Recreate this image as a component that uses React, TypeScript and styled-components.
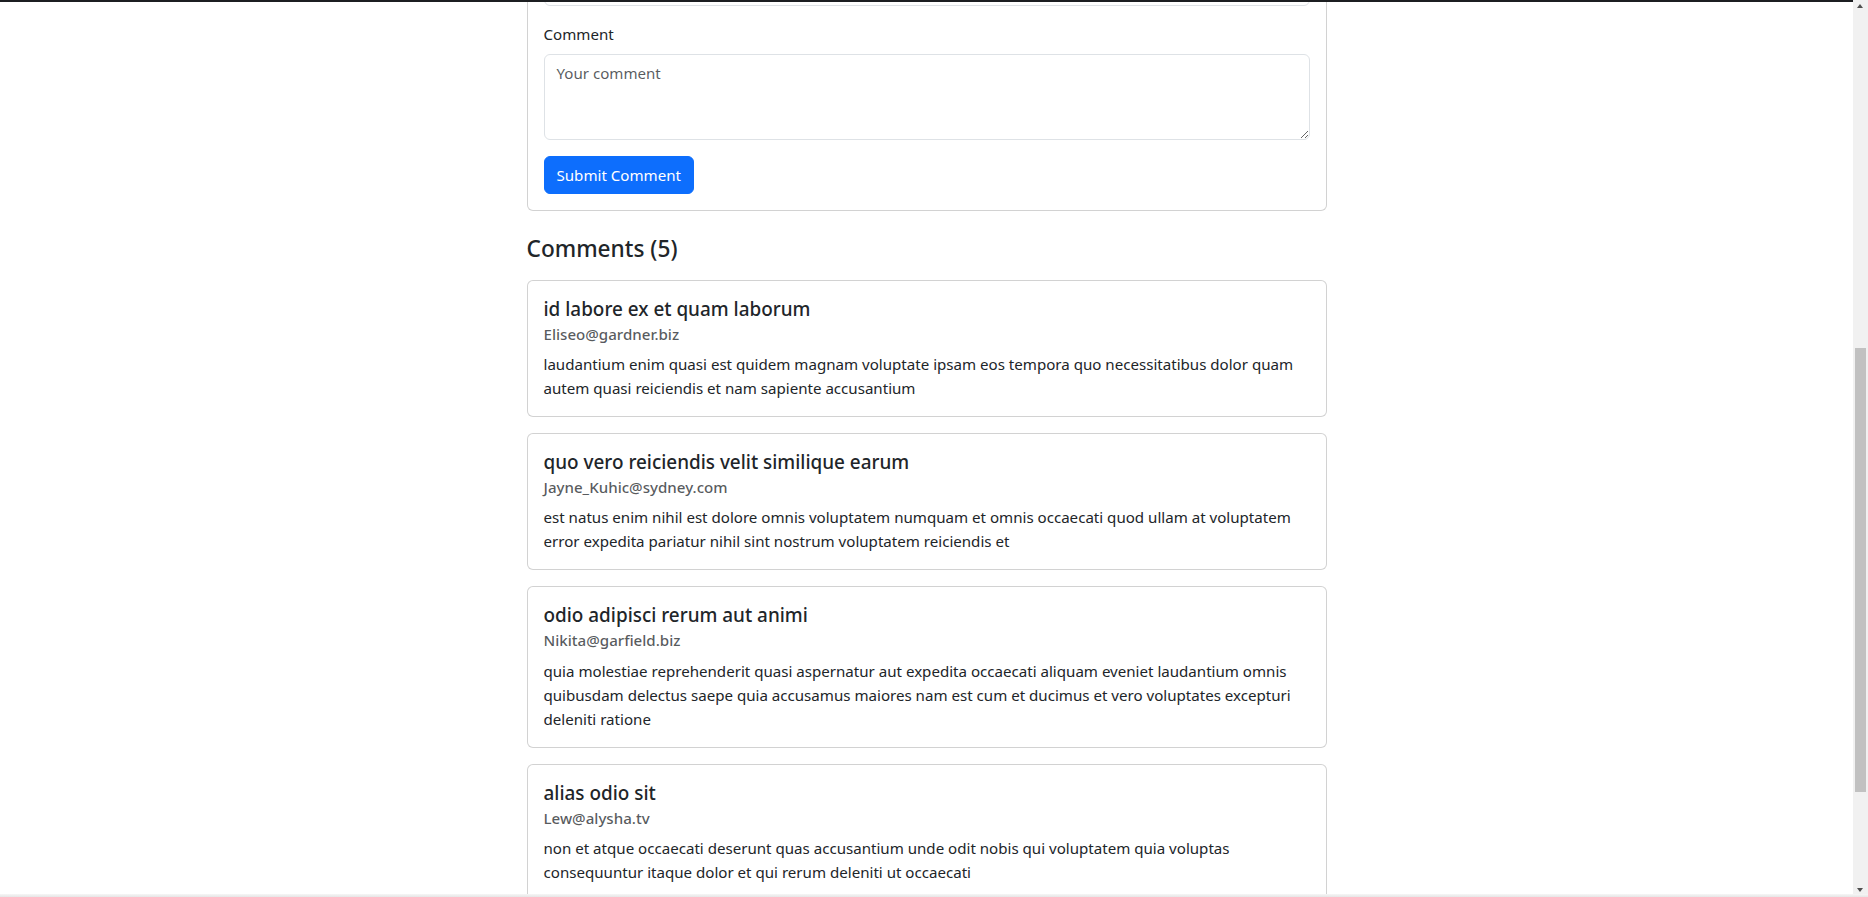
import React, { useLayoutEffect, useRef } from "react";
import styled, { createGlobalStyle } from "styled-components";

const GlobalStyle = createGlobalStyle`
  *, *::before, *::after { box-sizing: border-box; }
  body {
    margin: 0;
    padding-right: 15px;
    font-family: "Noto Sans", system-ui, sans-serif;
    font-size: 15.1px;
    line-height: 24px;
    color: #212529;
    background: #fff;
  }
`;

const TopEdge = styled.div`
  position: fixed;
  top: 0;
  left: 0;
  right: 0;
  height: 2px;
  background: #1c1e21;
  z-index: 10;
`;

const BottomEdge = styled.div`
  position: fixed;
  left: 0;
  right: 0;
  bottom: 0;
  height: 3px;
  background: linear-gradient(to bottom, #f6f6f6, #e6e6e6);
  z-index: 12;
`;

const ScrollTrack = styled.div`
  position: fixed;
  top: 0;
  right: 0;
  bottom: 0;
  width: 15px;
  background: #f1f1f1;
  z-index: 11;
`;

const ScrollArrow = styled.div<{ $down?: boolean }>`
  position: absolute;
  left: 4px;
  width: 0;
  height: 0;
  border-left: 3.5px solid transparent;
  border-right: 3.5px solid transparent;
  ${(p) =>
    p.$down
      ? `bottom: 5px; border-top: 4px solid #505050;`
      : `top: 4px; border-bottom: 4px solid #505050;`}
`;

const ScrollThumb = styled.div`
  position: absolute;
  left: 2px;
  right: 2px;
  top: 348px;
  height: 444px;
  background: #c1c1c1;
`;

const NavBar = styled.nav`
  background: #212529;
  padding: 8px 0;
`;

const NavInner = styled.div`
  max-width: 800px;
  margin: 0 auto;
  display: flex;
  align-items: center;
  justify-content: space-between;
  height: 40px;
`;

const Brand = styled.span`
  color: #fff;
  font-size: 19px;
  line-height: 30px;
`;

const NavLink = styled.span`
  color: rgba(255, 255, 255, 0.55);
`;

const Container = styled.main`
  max-width: 800px;
  margin: 0 auto;
  padding: 24px 0 10px;
`;

const PageTitle = styled.h1`
  margin: 0 0 16px;
  font-size: 38px;
  font-weight: 500;
  line-height: 48px;
`;

const OutlineButton = styled.button`
  display: inline-block;
  font: inherit;
  padding: 6px 12px;
  border: 1px solid #6c757d;
  border-radius: 6px;
  background: transparent;
  color: #6c757d;
  margin-bottom: 16px;
`;

const Card = styled.section<{ $mb: number }>`
  border: 1px solid rgba(0, 0, 0, 0.175);
  border-radius: 6px;
  background: #fff;
  margin-bottom: ${(p) => p.$mb}px;
`;

const CardBody = styled.div`
  padding: 16px;
`;

const CardTitle = styled.h5<{ $size: number; $lh: number; $mb?: number }>`
  margin: 0 0 ${(p) => p.$mb ?? 8}px;
  font-size: ${(p) => p.$size}px;
  font-weight: 500;
  line-height: ${(p) => p.$lh}px;
  color: #212529;
`;

const CardSubtitle = styled.h6`
  margin: -4px 0 8px;
  font-size: 15.1px;
  font-weight: 500;
  line-height: 19.2px;
  color: rgba(33, 37, 41, 0.75);
`;

const CardText = styled.p`
  margin: 0;
`;

const FormGroup = styled.div`
  margin-bottom: 16px;
`;

const Label = styled.label`
  display: inline-block;
  margin-bottom: 8px;
`;

const fieldStyles = `
  display: block;
  width: 100%;
  padding: 6px 12px;
  font: inherit;
  font-size: 15.1px;
  line-height: 24px;
  color: #212529;
  background: #fff;
  border: 1px solid #dee2e6;
  border-radius: 6px;
  &::placeholder { color: rgba(33, 37, 41, 0.75); }
`;

const Input = styled.input`
  ${fieldStyles}
`;

const TextArea = styled.textarea`
  ${fieldStyles}
  height: 86px;
  resize: vertical;
`;

const SubmitButton = styled.button`
  display: inline-block;
  font: inherit;
  font-size: 15.1px;
  line-height: 24px;
  padding: 6px 12px;
  border: 1px solid #0d6efd;
  border-radius: 6px;
  background: #0d6efd;
  color: #fff;
`;

const SectionHeading = styled.h4`
  margin: 0 0 16px;
  font-size: 22.65px;
  font-weight: 500;
  line-height: 28.8px;
`;

const comments = [
  {
    name: "id labore ex et quam laborum",
    email: "Eliseo@gardner.biz",
    body: "laudantium enim quasi est quidem magnam voluptate ipsam eos tempora quo necessitatibus dolor quam autem quasi reiciendis et nam sapiente accusantium",
  },
  {
    name: "quo vero reiciendis velit similique earum",
    email: "Jayne_Kuhic@sydney.com",
    body: "est natus enim nihil est dolore omnis voluptatem numquam et omnis occaecati quod ullam at voluptatem error expedita pariatur nihil sint nostrum voluptatem reiciendis et",
  },
  {
    name: "odio adipisci rerum aut animi",
    email: "Nikita@garfield.biz",
    body: "quia molestiae reprehenderit quasi aspernatur aut expedita occaecati aliquam eveniet laudantium omnis quibusdam delectus saepe quia accusamus maiores nam est cum et ducimus et vero voluptates excepturi deleniti ratione",
  },
  {
    name: "alias odio sit",
    email: "Lew@alysha.tv",
    body: "non et atque occaecati deserunt quas accusantium unde odit nobis qui voluptatem quia voluptas consequuntur itaque dolor et qui rerum deleniti ut occaecati",
  },
  {
    name: "vero eaque aliquid doloribus et culpa",
    email: "Hayden@althea.biz",
    body: "harum non quasi et ratione tempore iure ex voluptates in ratione harum architecto fugit inventore cupiditate voluptates magni quo et",
  },
];

export default function App() {
  const areaRef = useRef<HTMLTextAreaElement>(null);

  useLayoutEffect(() => {
    const el = areaRef.current;
    if (!el) return;
    const top = el.getBoundingClientRect().top + window.scrollY;
    window.scrollTo(0, top - 54);
  }, []);

  return (
    <>
      <GlobalStyle />
      <TopEdge />
      <ScrollTrack>
        <ScrollArrow />
        <ScrollThumb />
        <ScrollArrow $down />
      </ScrollTrack>
      <BottomEdge />
      <NavBar>
        <NavInner>
          <Brand>Blog</Brand>
          <NavLink>Posts</NavLink>
        </NavInner>
      </NavBar>
      <Container>
        <OutlineButton type="button">← Back to Posts</OutlineButton>
        <PageTitle>Post Details</PageTitle>
        <Card $mb={24}>
          <CardBody>
            <CardTitle $size={30} $lh={38}>
              sunt aut facere repellat provident occaecati excepturi optio reprehenderit
            </CardTitle>
            <CardSubtitle>By Leanne Graham</CardSubtitle>
            <CardText>
              quia et suscipit suscipit recusandae consequuntur expedita et cum reprehenderit
              molestiae ut ut quas totam nostrum rerum est autem sunt rem eveniet architecto
            </CardText>
          </CardBody>
        </Card>
        <Card $mb={24}>
          <CardBody>
            <CardTitle $size={18.9} $lh={24} $mb={16}>
              Add a Comment
            </CardTitle>
            <FormGroup>
              <Label htmlFor="name">Name</Label>
              <Input id="name" placeholder="Your name" />
            </FormGroup>
            <FormGroup>
              <Label htmlFor="email">Email</Label>
              <Input id="email" type="email" placeholder="Your email" />
            </FormGroup>
            <FormGroup>
              <Label htmlFor="comment">Comment</Label>
              <TextArea id="comment" ref={areaRef} rows={3} placeholder="Your comment" />
            </FormGroup>
            <SubmitButton type="button">Submit Comment</SubmitButton>
          </CardBody>
        </Card>
        <SectionHeading>Comments ({comments.length})</SectionHeading>
        {comments.map((c) => (
          <Card $mb={16} key={c.email}>
            <CardBody>
              <CardTitle $size={18.9} $lh={24}>
                {c.name}
              </CardTitle>
              <CardSubtitle>{c.email}</CardSubtitle>
              <CardText>{c.body}</CardText>
            </CardBody>
          </Card>
        ))}
      </Container>
    </>
  );
}
